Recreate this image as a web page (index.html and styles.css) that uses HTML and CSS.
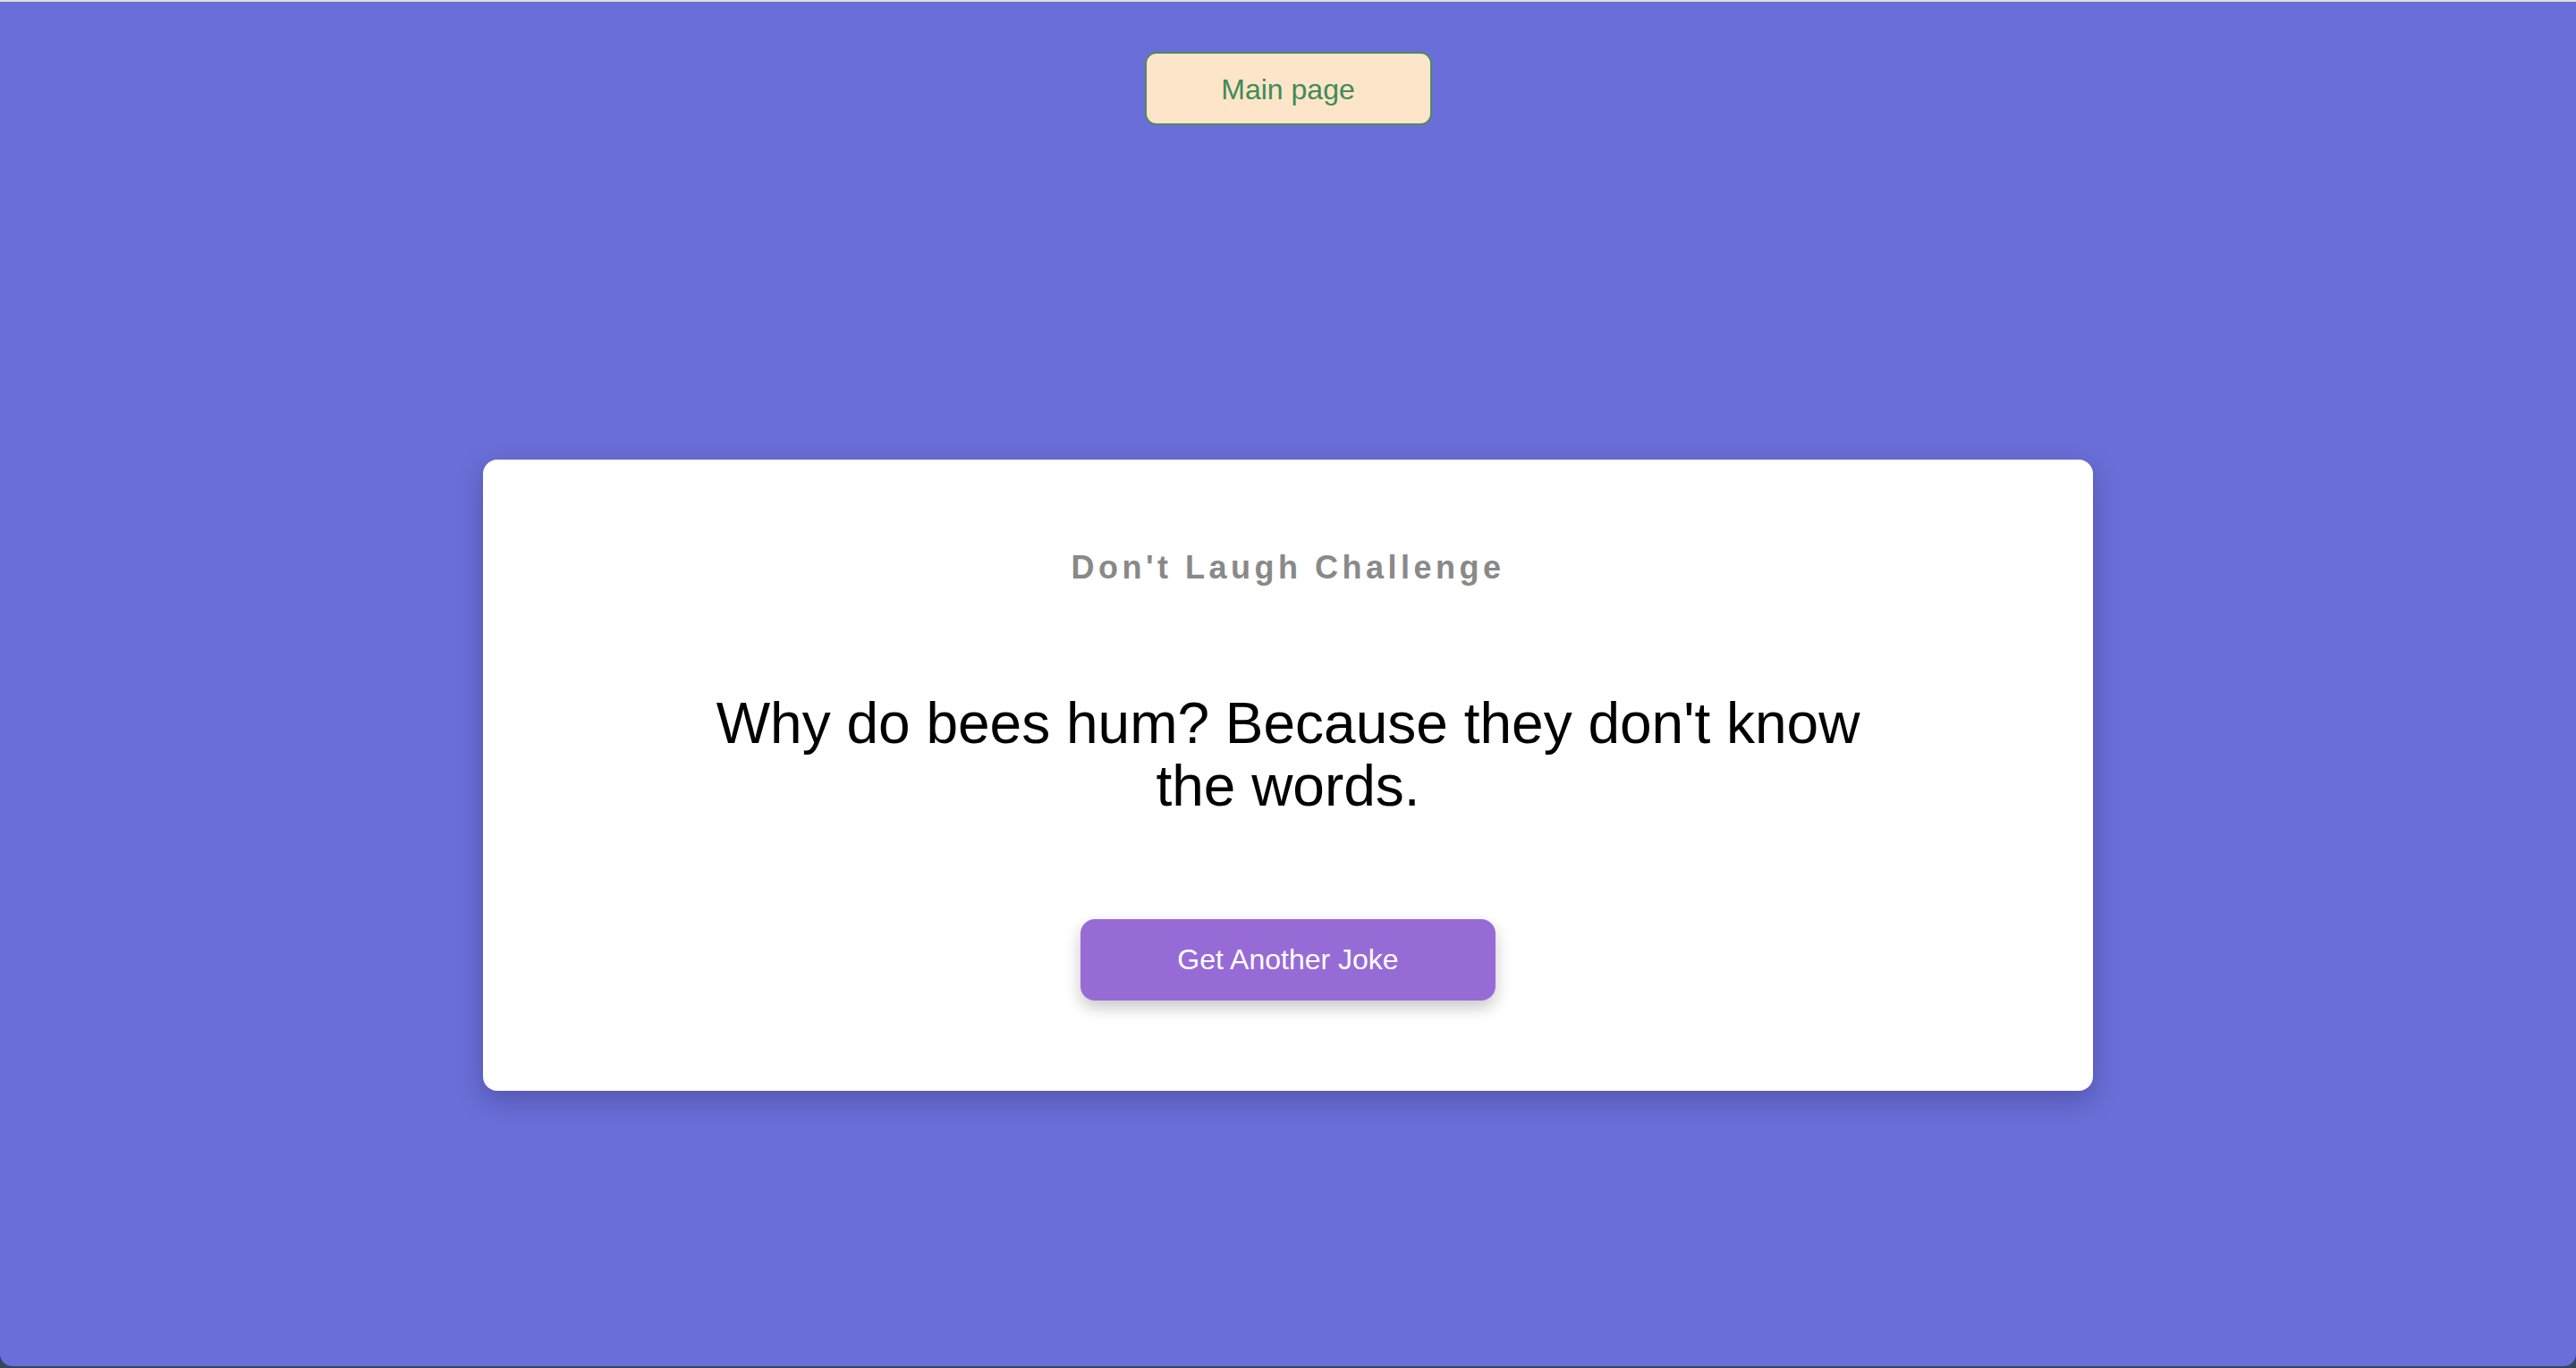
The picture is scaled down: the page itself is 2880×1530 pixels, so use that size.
FILE: index.html
```html
<!DOCTYPE html>
<html lang="en">
<head>
<meta charset="utf-8">
<title>Don't Laugh Challenge</title>
<link rel="stylesheet" href="styles.css">
</head>
<body>
<div class="page">
  <a class="main-link" href="#">Main page</a>
  <main class="card">
    <h1 class="card-title">Don't Laugh Challenge</h1>
    <p class="joke">Why do bees hum? Because they don't know the words.</p>
    <button class="joke-btn" type="button">Get Another Joke</button>
  </main>
</div>
</body>
</html>
```
FILE: styles.css
```css
html {
  background: #34465e;
}
body {
  margin: 0;
  font-family: "Liberation Sans", Arial, Helvetica, sans-serif;
}
.page {
  min-height: 1528px;
  box-sizing: border-box;
  background: #6a6ed8;
  border-top: 2px solid #dedede;
  border-radius: 0 0 14px 14px;
  display: flex;
  flex-direction: column;
  align-items: center;
}
.main-link {
  margin-top: 56px;
  width: 321px;
  height: 82px;
  box-sizing: border-box;
  display: flex;
  align-items: center;
  justify-content: center;
  background: #fce5c8;
  border: 2px solid #4f8a60;
  border-radius: 13px;
  color: #418a5a;
  font-size: 32px;
  text-decoration: none;
  padding-top: 2px;
}
.card {
  margin-top: 374px;
  width: 1800px;
  box-sizing: border-box;
  background: #ffffff;
  border-radius: 16px;
  box-shadow: 0 10px 30px rgba(20, 20, 60, 0.28);
  padding: 101px 40px 101px;
  display: flex;
  flex-direction: column;
  align-items: center;
}
.card-title {
  margin: 0;
  font-size: 36px;
  font-weight: bold;
  letter-spacing: 4.5px;
  line-height: 40px;
  color: #898989;
  text-align: center;
}
.joke {
  margin: 119px 0 0;
  max-width: 1320px;
  font-size: 64px;
  line-height: 70px;
  color: #000000;
  text-align: center;
}
.joke-btn {
  margin-top: 114px;
  width: 464px;
  height: 91px;
  border: none;
  border-radius: 16px;
  background: #976bd6;
  color: #ffffff;
  font-family: "Liberation Sans", Arial, Helvetica, sans-serif;
  font-size: 32px;
  box-shadow: 0 8px 18px rgba(0, 0, 0, 0.22);
  cursor: pointer;
}
```
